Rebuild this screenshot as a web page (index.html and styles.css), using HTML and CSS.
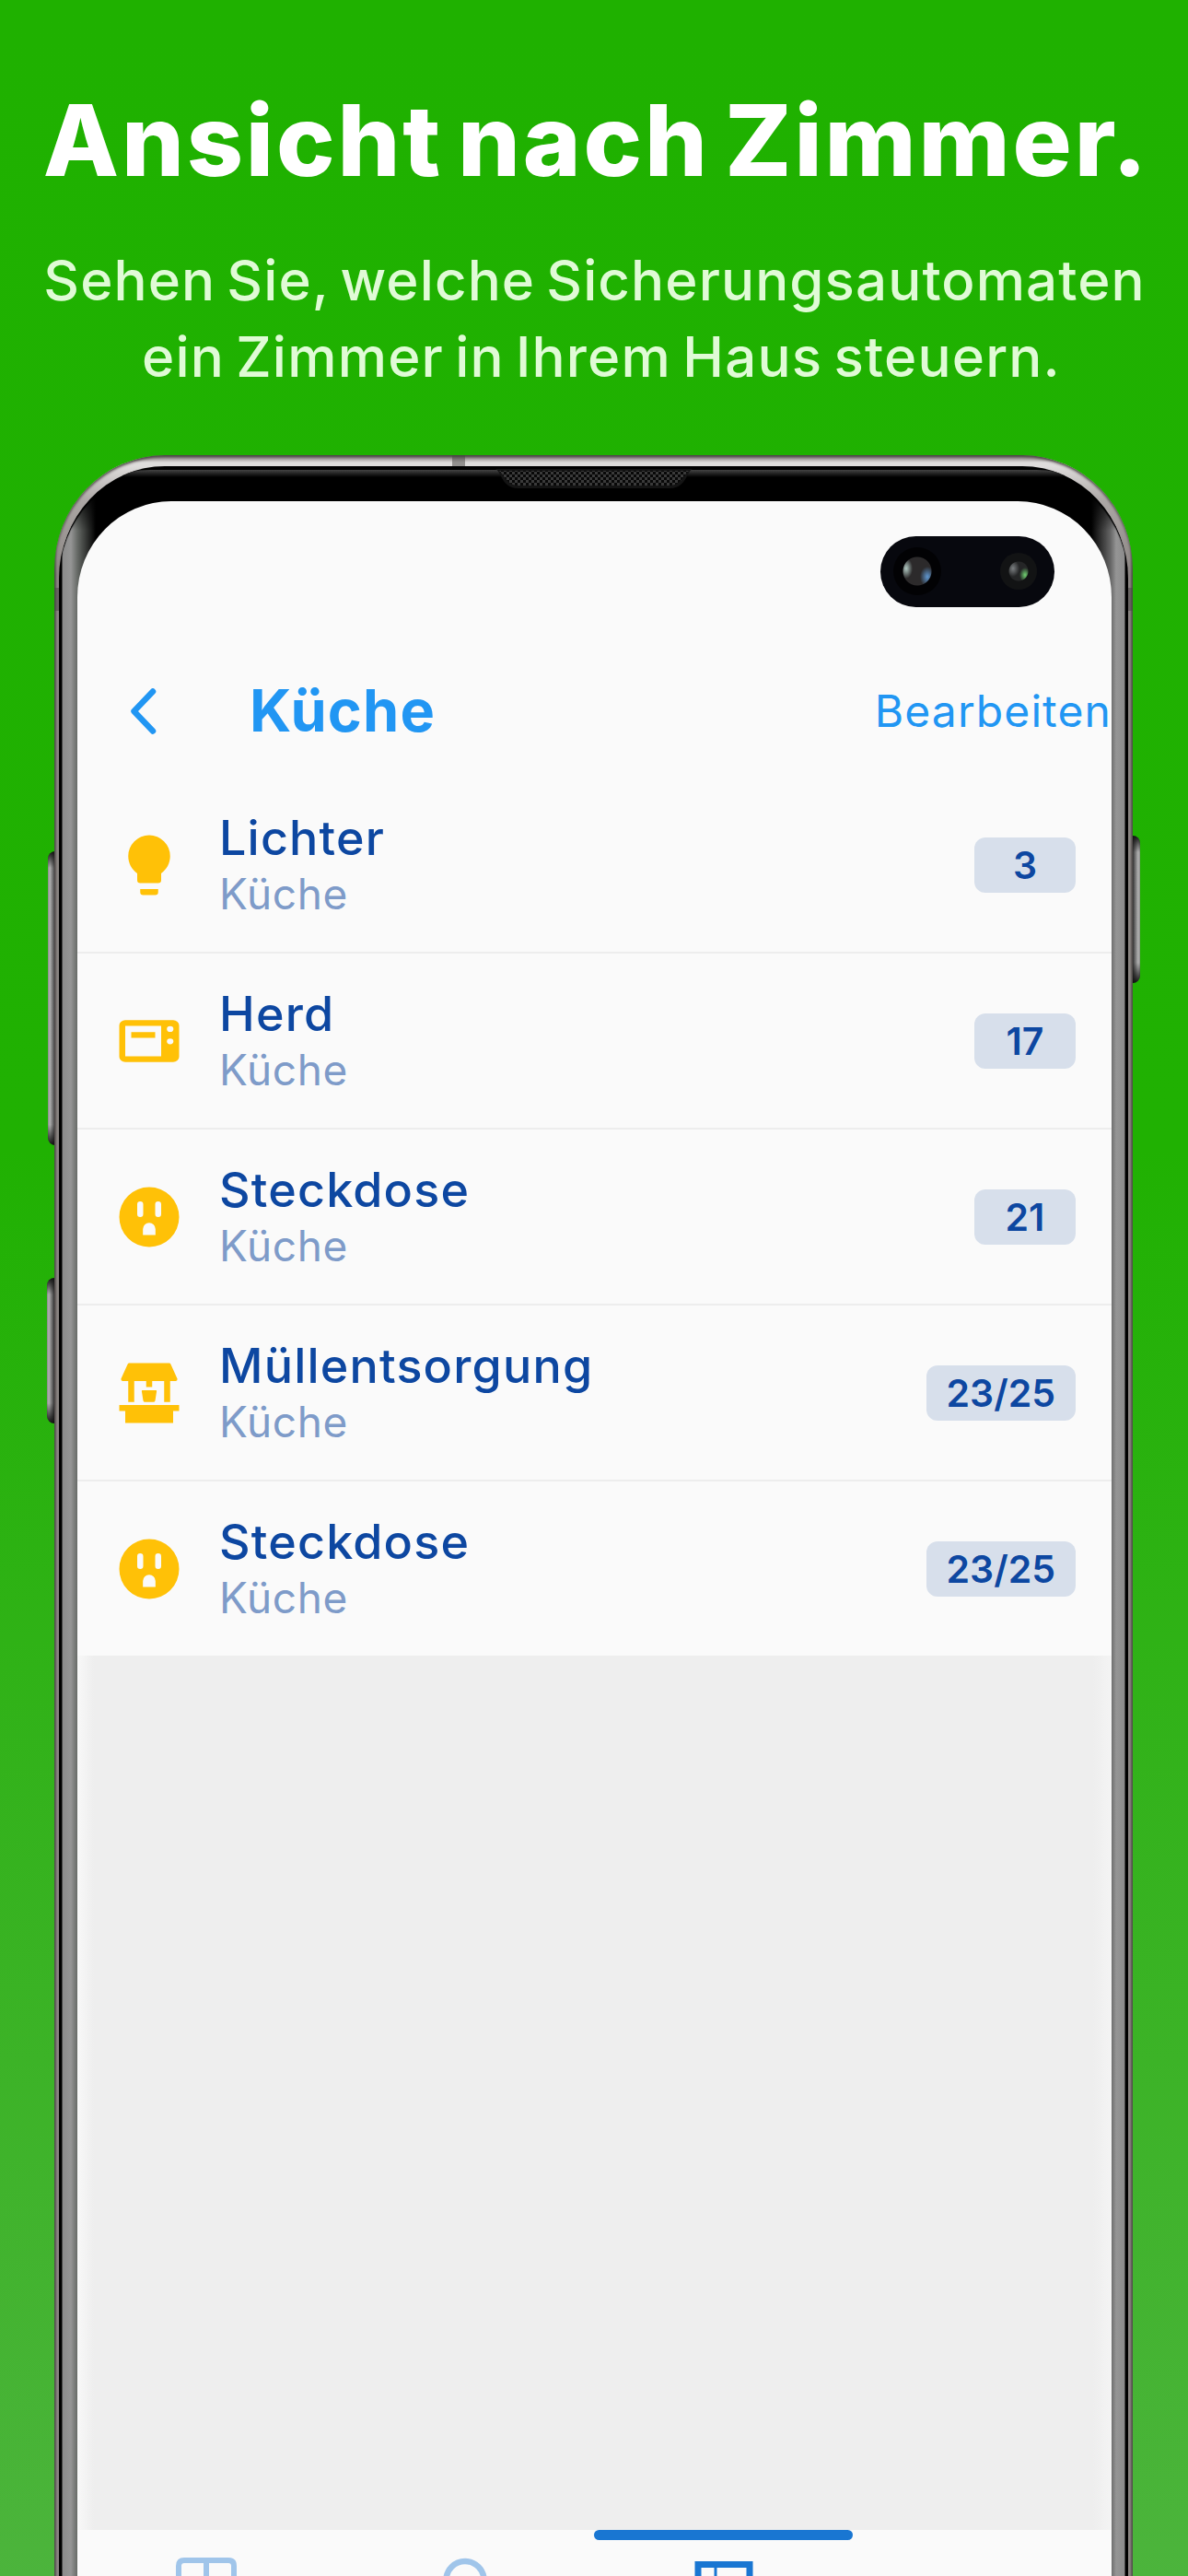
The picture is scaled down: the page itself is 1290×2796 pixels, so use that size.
FILE: index.html
```html
<!DOCTYPE html>
<html lang="de">
<head>
    <meta charset="UTF-8">
    <meta name="viewport" content="width=device-width, initial-scale=1.0">
    <title>Ansicht nach Zimmer</title>
    <link rel="stylesheet" href="styles.css">
</head>
<body>
    <header class="promo">
        <h1>Ansicht nach Zimmer.</h1>
        <p><span class="line-one">Sehen Sie, welche Sicherungsautomaten</span><br><span class="line-two">ein Zimmer in Ihrem Haus steuern.</span></p>
    </header>
    <div class="phone">
        <div class="side-button volume"></div>
        <div class="side-button assistant"></div>
        <div class="side-button power"></div>
        <div class="rim">
            <div class="antenna antenna-top"></div>
            <div class="antenna antenna-left"></div>
            <div class="antenna antenna-right"></div>
            <div class="glass">
                <div class="bezel-shine"></div>
                <svg class="speaker" width="214" height="22" viewBox="0 0 214 22">
                    <defs>
                        <pattern id="mesh" width="6" height="6" patternUnits="userSpaceOnUse">
                            <rect width="6" height="6" fill="#3a3a3a"/>
                            <rect width="3" height="3" fill="#080808"/>
                            <rect x="3" y="3" width="3" height="3" fill="#080808"/>
                        </pattern>
                    </defs>
                    <path d="M0 0H214C207 3 208 20 190 21H24C6 20 7 3 0 0Z" fill="#141414"/>
                    <path d="M4 2H210C204 7 202 18 188 18H26C12 18 10 7 4 2Z" fill="url(#mesh)"/>
                </svg>
                <div class="screen">
                    <div class="camera">
                        <div class="lens lens-big"></div>
                        <div class="lens lens-small"></div>
                    </div>
                    <nav class="topbar">
                        <svg class="back" width="40" height="60" viewBox="0 0 40 60">
                            <path d="M31 8.5L10.5 30L31 51.5" fill="none" stroke="#2196f3" stroke-width="6.5" stroke-linecap="round" stroke-linejoin="round"/>
                        </svg>
                        <h2>Küche</h2>
                        <a class="edit">Bearbeiten</a>
                    </nav>
                    <ul class="devices">
                        <li>
                            <svg class="icon" viewBox="0 0 24 24"><path d="M12 2A7 7 0 0 0 5 9C5 11.38 6.19 13.47 8 14.74V17A1 1 0 0 0 9 18H15A1 1 0 0 0 16 17V14.74C17.81 13.47 19 11.38 19 9A7 7 0 0 0 12 2M9 21A1 1 0 0 0 10 22H14A1 1 0 0 0 15 21V20H9V21Z"/></svg>
                            <div class="info">
                                <h3>Lichter</h3>
                                <p>Küche</p>
                            </div>
                            <span class="badge">3</span>
                        </li>
                        <li>
                            <svg class="icon" viewBox="0 0 24 24"><path fill-rule="evenodd" d="M4 4H20A2 2 0 0 1 22 6V18A2 2 0 0 1 20 20H4A2 2 0 0 1 2 18V6A2 2 0 0 1 4 4M4 6.2V17.8H16V6.2H4M19 6.3A1.1 1.1 0 0 0 19 8.5A1.1 1.1 0 0 0 19 6.3M19 11A1.1 1.1 0 0 0 19 13.2A1.1 1.1 0 0 0 19 11M6 8.6H14V10.8H6Z" transform="translate(0 1.5) scale(1 .875)"/></svg>
                            <div class="info">
                                <h3>Herd</h3>
                                <p>Küche</p>
                            </div>
                            <span class="badge">17</span>
                        </li>
                        <li>
                            <svg class="icon" viewBox="0 0 24 24"><path fill-rule="evenodd" d="M12 2A10 10 0 0 1 12 22A10 10 0 0 1 12 2M9 6.8A1 1 0 0 0 8 7.8V11A1 1 0 0 0 10 11V7.8A1 1 0 0 0 9 6.8M15 6.8A1 1 0 0 0 14 7.8V11A1 1 0 0 0 16 11V7.8A1 1 0 0 0 15 6.8M9.9 18H14.1V16A2.1 2.1 0 0 0 9.9 16V18Z"/></svg>
                            <div class="info">
                                <h3>Steckdose</h3>
                                <p>Küche</p>
                            </div>
                            <span class="badge">21</span>
                        </li>
                        <li>
                            <svg class="icon" viewBox="0 0 24 24"><path d="M5.3 2H18.7Q19 2 19.2 2.4L21.4 7.2Q21.5 8 20.8 8H19V15H17V8H13V10H11V8H7V15H5V8H3.2Q2.5 8 2.6 7.2L4.8 2.4Q5 2 5.3 2M9.7 11.1H14.3Q14.5 11.1 14.5 11.4L14 14.5Q13.9 15 13.4 15H10.6Q10.1 15 10 14.5L9.5 11.4Q9.5 11.1 9.7 11.1M2 16H22V18H20V22H4V18H2Z"/></svg>
                            <div class="info">
                                <h3>Müllentsorgung</h3>
                                <p>Küche</p>
                            </div>
                            <span class="badge">23/25</span>
                        </li>
                        <li>
                            <svg class="icon" viewBox="0 0 24 24"><path fill-rule="evenodd" d="M12 2A10 10 0 0 1 12 22A10 10 0 0 1 12 2M9 6.8A1 1 0 0 0 8 7.8V11A1 1 0 0 0 10 11V7.8A1 1 0 0 0 9 6.8M15 6.8A1 1 0 0 0 14 7.8V11A1 1 0 0 0 16 11V7.8A1 1 0 0 0 15 6.8M9.9 18H14.1V16A2.1 2.1 0 0 0 9.9 16V18Z"/></svg>
                            <div class="info">
                                <h3>Steckdose</h3>
                                <p>Küche</p>
                            </div>
                            <span class="badge">23/25</span>
                        </li>
                    </ul>
                    <div class="tabs">
                        <div class="tab">
                            <svg width="66" height="20" viewBox="0 0 66 20"><path d="M3 33V9Q3 3 9 3H57Q63 3 63 9V33M33 3V33" fill="none" stroke="#a0c5ea" stroke-width="6"/></svg>
                        </div>
                        <div class="tab">
                            <svg width="66" height="20" viewBox="0 0 66 20"><circle cx="33" cy="24.5" r="20.5" fill="none" stroke="#a0c5ea" stroke-width="6.5"/></svg>
                        </div>
                        <div class="tab active">
                            <svg width="66" height="20" viewBox="0 0 66 20"><path d="M5 33V7.5H61V33" fill="none" stroke="#1976d2" stroke-width="7"/><path d="M24 8V33" stroke="#1976d2" stroke-width="3"/></svg>
                        </div>
                        <div class="tab"></div>
                    </div>
                </div>
            </div>
        </div>
    </div>
</body>
</html>
```
FILE: styles.css
```css
* {
    box-sizing: border-box;
}
body {
    margin: 0;
    height: 2796px;
    overflow: hidden;
    font-family: 'Inter', 'Liberation Sans', sans-serif;
    background: linear-gradient(to bottom, #1fb100 0, #20b102 1250px, #4cb43c 2796px);
}
h1, h2, h3, p, ul {
    margin: 0;
    padding: 0;
}
.promo {
    height: 494px;
    padding-top: 92px;
    text-align: center;
    white-space: nowrap;
}
.promo h1 {
    padding-left: 5px;
    font-size: 107px;
    line-height: 120px;
    font-weight: 800;
    letter-spacing: 2.8px;
    word-spacing: -10px;
    color: #fff;
}
.promo p {
    margin-top: 51px;
    font-size: 60px;
    line-height: 83px;
    font-weight: 500;
    word-spacing: -5px;
    color: #e0fbd6;
}
.line-one {
    padding-left: 1px;
    letter-spacing: 1.1px;
}
.line-two {
    padding-left: 16px;
    letter-spacing: 1.2px;
}
.phone {
    position: relative;
    width: 1171px;
    margin-left: 59px;
}
.rim {
    position: relative;
    height: 2302px;
    padding: 12px 5px 0;
    border-radius: 120px 120px 0 0 / 124px 124px 0 0;
    background: linear-gradient(to bottom, #6f6766 0, #dedcdb 8px, #dedcdb 12px, rgba(180,175,173,0.8) 50px, rgba(150,145,143,0) 130px),
        linear-gradient(to right, #4e4a48, #8a8582 3px, #8a8582 1168px, #4e4a48);
    box-shadow: inset 0 2px 3px #4d4646;
}
.glass {
    position: relative;
    height: 100%;
    padding: 38px 18px 0 20px;
    border-radius: 115px 115px 0 0 / 122px 122px 0 0;
    background: linear-gradient(to bottom, #000 24px, rgba(0,0,0,0) 70px),
        linear-gradient(to right, #000 3px, #8c8c8c 4px, #959595 13px, #666a66 20px, #000 40px, #000 1121px, #666 1142px, #959595 1148px, #8c8c8c 1157px, #000 1158px);
    box-shadow: inset 0 3px 1px #000;
}
.bezel-shine {
    position: absolute;
    left: 70px;
    right: 70px;
    top: 4px;
    height: 8px;
    border-radius: 30px 30px 0 0 / 8px 8px 0 0;
    background: linear-gradient(to bottom, #444, #000);
}
.speaker {
    position: absolute;
    left: 474px;
    top: 3px;
}
.antenna {
    position: absolute;
    background: rgba(70,68,66,0.5);
}
.antenna-top {
    left: 432px;
    top: 0;
    width: 14px;
    height: 12px;
}
.antenna-left, .antenna-right {
    top: 144px;
    width: 5px;
    height: 25px;
}
.antenna-left {
    left: 0;
}
.antenna-right {
    right: 0;
}
.side-button {
    position: absolute;
    width: 10px;
    border-radius: 8px 0 0 8px;
    background: linear-gradient(to bottom, #111, rgba(0,0,0,0) 18px, rgba(0,0,0,0) calc(100% - 22px), #111),
        linear-gradient(to right, #888, #b4b4b4 2px, #777 5px, #333 8px);
}
.volume {
    left: -7px;
    top: 430px;
    height: 319px;
}
.assistant {
    left: -8px;
    top: 893px;
    height: 158px;
}
.power {
    right: -8px;
    top: 413px;
    height: 160px;
    transform: scaleX(-1);
}
.screen {
    position: relative;
    display: flex;
    flex-direction: column;
    height: 2252px;
    padding-top: 160px;
    overflow: hidden;
    border-radius: 102px 102px 0 0 / 104px 104px 0 0;
    background: linear-gradient(to bottom, #fafafa 300px, rgba(250,250,250,0) 300px),
        linear-gradient(to right, #f8f8f8, #eee 18px, #eee 1103px, #f4f4f4);
}
.camera {
    position: absolute;
    left: 872px;
    top: 38px;
    width: 189px;
    height: 77px;
    border-radius: 39px;
    background: #07080e;
}
.lens {
    position: absolute;
    border-radius: 50%;
}
.lens-big {
    left: 14px;
    top: 12px;
    width: 52px;
    height: 52px;
    background: radial-gradient(circle, rgba(0,0,0,0) 15px, #020204 16px),
        radial-gradient(ellipse 7px 11px at 14px 23px, #b0c8c2 0, rgba(60,65,66,0) 100%),
        radial-gradient(ellipse 8px 11px at 37px 32px, #5f97d0 0, rgba(40,50,70,0) 100%),
        #2c2a2b;
}
.lens-small {
    left: 130px;
    top: 18px;
    width: 40px;
    height: 40px;
    background: radial-gradient(circle, rgba(0,0,0,0) 10px, #121314 11px),
        radial-gradient(ellipse 7px 9px at 14px 17px, #7c8082 0, rgba(60,60,60,0) 100%),
        radial-gradient(ellipse 6px 8px at 27px 24px, #6fd070 0, rgba(30,60,30,0) 100%),
        #252627;
}
.topbar {
    position: relative;
    display: flex;
    align-items: center;
    height: 140px;
    padding: 0 0 4px 51px;
    color: #2196f3;
}
.topbar h2 {
    margin: -2px 0 0 96px;
    font-size: 63px;
    line-height: 72px;
    font-weight: 700;
    letter-spacing: 1.2px;
}
.edit {
    margin-left: auto;
    font-size: 48px;
    line-height: 60px;
    letter-spacing: 1.1px;
}
.devices {
    list-style: none;
    background: #fafafa;
}
.devices li {
    display: flex;
    align-items: center;
    height: 191px;
    padding: 0 39px;
    border-bottom: 2px solid #ededed;
}
.devices li:last-child {
    height: 189px;
    border-bottom: none;
}
.icon {
    width: 78px;
    height: 78px;
    fill: #ffc107;
}
.info {
    flex: 1;
    margin-left: 37px;
    white-space: nowrap;
}
.info h3 {
    font-size: 52px;
    line-height: 62px;
    font-weight: 500;
    letter-spacing: 1.2px;
    color: #0d47a1;
}
.info p {
    font-size: 46px;
    line-height: 58px;
    letter-spacing: 0.6px;
    color: #7e9bc9;
}
.badge {
    min-width: 110px;
    height: 60px;
    padding: 0 22px;
    border-radius: 12px;
    background: #d7dfeb;
    color: #0d47a1;
    font-size: 41px;
    line-height: 60px;
    font-weight: 600;
    text-align: center;
}
.tabs {
    display: flex;
    height: 50px;
    margin-top: auto;
    background: #fafafa;
}
.tab {
    display: flex;
    flex: 1;
    justify-content: center;
    padding-top: 30px;
}
.active::before {
    content: "";
    position: absolute;
    width: 281px;
    height: 11px;
    margin-top: -30px;
    border-radius: 6px;
    background: #1976d2;
}
```
